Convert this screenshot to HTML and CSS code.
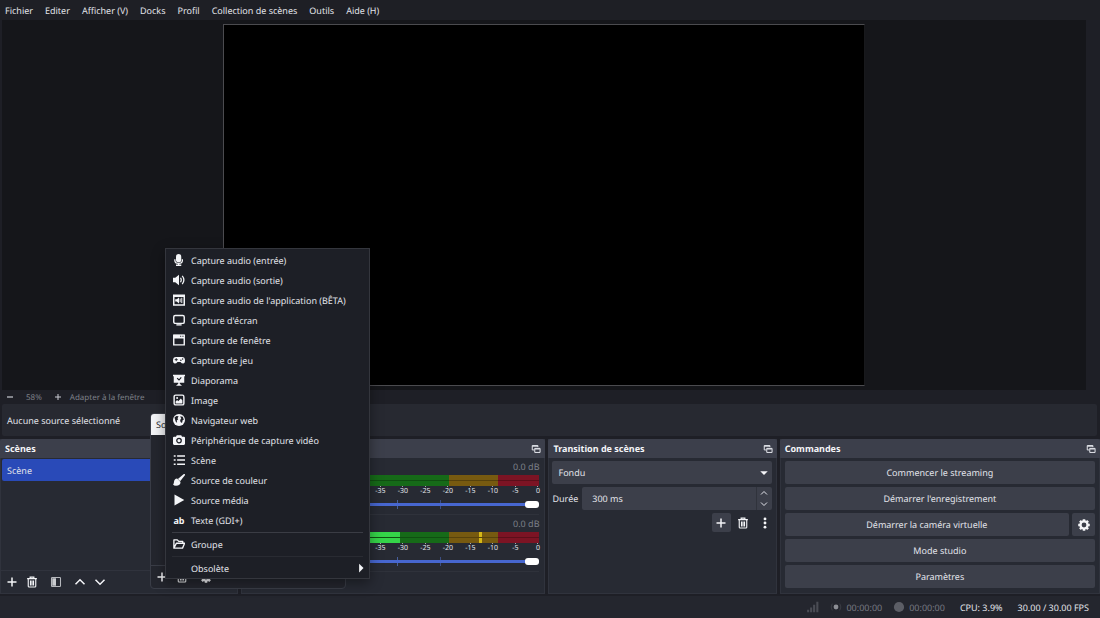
FILE: index.html
```html
<!DOCTYPE html>
<html lang="fr">
<head>
<meta charset="utf-8">
<title>Studio</title>
<link rel="stylesheet" href="styles.css">
</head>
<body>
<svg class="defs" aria-hidden="true">
  <symbol id="plus" viewBox="0 0 16 16"><path d="M8 2v12M2 8h12" fill="none" stroke="currentColor" stroke-width="2"/></symbol>
  <symbol id="minus" viewBox="0 0 16 16"><path d="M2 8h12" fill="none" stroke="currentColor" stroke-width="2.4"/></symbol>
  <symbol id="trash" viewBox="0 0 16 16"><path d="M1.500 3.500h13M5.500 3V1.500h5V3M3 4v9.500q0 1.200 1.200 1.200h7.600q1.200 0 1.200-1.200V4M6 6v6.500M8 6v6.500M10 6v6.500" fill="none" stroke="currentColor" stroke-width="1.500"/></symbol>
  <symbol id="filter" viewBox="0 0 16 16"><rect x="2" y="2" width="12" height="12" rx="1" fill="none" stroke="currentColor" stroke-width="1.400" opacity=".7"/><path d="M3 3h5v10H3z" fill="currentColor" opacity=".8"/></symbol>
  <symbol id="up" viewBox="0 0 16 16"><path d="M2 11l6-6 6 6" fill="none" stroke="currentColor" stroke-width="2"/></symbol>
  <symbol id="down" viewBox="0 0 16 16"><path d="M2 5l6 6 6-6" fill="none" stroke="currentColor" stroke-width="2"/></symbol>
  <symbol id="dots" viewBox="0 0 16 16"><g fill="currentColor"><circle cx="8" cy="2.500" r="1.900"/><circle cx="8" cy="8" r="1.900"/><circle cx="8" cy="13.500" r="1.900"/></g></symbol>
  <symbol id="popout" viewBox="0 0 16 16"><path d="M11 5V2.500H2v7h3M2 3.500h9M6 7h8.500v6.500H6zM6 8h8" fill="none" stroke="currentColor" stroke-width="1.600"/></symbol>
  <symbol id="gear" viewBox="0 0 16 16"><circle cx="8" cy="8" r="4.700" fill="none" stroke="currentColor" stroke-width="3"/><g stroke="currentColor" stroke-width="3.400"><path d="M8 .3v3M8 12.700v3M.3 8h3M12.700 8h3M2.600 2.600l2 2M11.400 11.400l2 2M13.400 2.600l-2 2M4.600 11.400l-2 2"/></g></symbol>
  <symbol id="mic" viewBox="0 0 16 16"><rect x="4" y="0" width="7" height="11" rx="3.500" fill="currentColor"/><path d="M2.500 7v1.500q0 3.900 5 3.900t5-3.900V7M7.500 12v3M4 15h7" fill="none" stroke="currentColor" stroke-width="1.700"/></symbol>
  <symbol id="speaker" viewBox="0 0 16 16"><path d="M0 5h3l5-4v14l-5-4H0z" fill="currentColor"/><path d="M10 5q2 3 0 6M12.300 2.500q4.400 5.500 0 11" fill="none" stroke="currentColor" stroke-width="1.700"/></symbol>
  <symbol id="appaudio" viewBox="0 0 16 16"><path d="M1 1.500h14v13H1zM1 3h14" fill="none" stroke="currentColor" stroke-width="2"/><path d="M3 7h2l3-2.500v8L5 10H3z" fill="currentColor"/><path d="M9.500 6v5M11.700 5v7" fill="none" stroke="currentColor" stroke-width="1.300"/></symbol>
  <symbol id="screen" viewBox="0 0 16 16"><rect x="1" y="2" width="14" height="10.500" rx="2" fill="none" stroke="currentColor" stroke-width="1.900"/><path d="M4.500 14.500h7" stroke="currentColor" stroke-width="1.800"/></symbol>
  <symbol id="window" viewBox="0 0 16 16"><path d="M1 1.500h14v13H1z" fill="none" stroke="currentColor" stroke-width="1.900"/><path d="M1 1h14v5H1z" fill="currentColor"/><path d="M9.500 3h1.500M12.500 3H14" stroke="#1d1f26" stroke-width="1.500"/></symbol>
  <symbol id="game" viewBox="0 0 16 16"><path d="M4 4Q0 4 0 8.500 0 12.500 2.500 12.500 4.500 12.500 6 10.500h4q1.500 2 3.500 2 2.500 0 2.500-4Q16 4 12 4z" fill="currentColor"/><path d="M4.300 5.500v4M2.300 7.500h4" stroke="#1d1f26" stroke-width="1.200"/><circle cx="10.500" cy="8.200" r="1" fill="#1d1f26"/><circle cx="12.800" cy="6.500" r="1" fill="#1d1f26"/></symbol>
  <symbol id="slides" viewBox="0 0 16 16"><path d="M0 1h16v2h-1v8.500H1V3H0zM7 11h2v2l3 2.500H4L7 13z" fill="currentColor"/><path d="M5.500 5.500L8 8l3-3.500" fill="none" stroke="#1d1f26" stroke-width="1.500"/></symbol>
  <symbol id="image" viewBox="0 0 16 16"><rect x="1.500" y="1.500" width="13" height="13" rx="2" fill="none" stroke="currentColor" stroke-width="1.900"/><path d="M3.500 12.500V10l2-2 1.500 1.500L10.500 6l2 2.500v4z" fill="currentColor"/><circle cx="5.500" cy="5.300" r="1.300" fill="currentColor"/></symbol>
  <symbol id="globe" viewBox="0 0 16 16"><circle cx="8" cy="8" r="8" fill="currentColor"/><path d="M2 4.500L4.500 2.500 7.500 3 6 5.500 7 7 5 8.500 5.500 12 3.500 10zM9.500 3l3.500.5 1.500 4-1.500.5-1 4-2-1.500L9.500 8 11 6z" fill="#1d1f26"/></symbol>
  <symbol id="camera" viewBox="0 0 16 16"><path d="M5 1.500h6l1 2h2.500Q16 3.500 16 5v8q0 1.500-1.500 1.500h-13Q0 14.500 0 13V5q0-1.500 1.500-1.500H4z" fill="currentColor"/><circle cx="8" cy="8.700" r="3" fill="none" stroke="#1d1f26" stroke-width="1.700"/></symbol>
  <symbol id="list" viewBox="0 0 16 16"><path d="M1 2.500h2.500M1 8h2.500M1 13.500h2.500M5.500 2.500H16M5.500 8H16M5.500 13.500H16" stroke="currentColor" stroke-width="2"/></symbol>
  <symbol id="brush" viewBox="0 0 16 16"><path d="M15.800.2q.6.800-.2 1.800L9.500 9.500l-3-3L14 .4q1-.8 1.800-.2z" fill="currentColor"/><path d="M5.500 6l4.500 4.500q0 5-6 5Q1 15.500 0 13.500q1.300-.5 1.300-3Q1.700 6.500 5.500 6z" fill="currentColor"/></symbol>
  <symbol id="play" viewBox="0 0 16 16"><path d="M2 .8L15 8 2 15.200z" fill="currentColor"/></symbol>
  <symbol id="folder" viewBox="0 0 16 16"><path d="M1.200 13.500V2.500h4.500l2 2H13V7M1.200 13.500L4.500 7h11l-2.800 6.500z" fill="none" stroke="currentColor" stroke-width="1.800" stroke-linejoin="round"/></symbol>
  <symbol id="right" viewBox="0 0 16 16"><path d="M5 1l7 7-7 7z" fill="currentColor"/></symbol>
  <symbol id="caret" viewBox="0 0 16 16"><path d="M2 5h12l-6 6z" fill="currentColor"/></symbol>
  <symbol id="signal" viewBox="0 0 16 16"><path d="M1.500 11.500V15M5.500 8.500V15M9.500 5V15M13.800 1V15" stroke="currentColor" stroke-width="2.800"/></symbol>
  <symbol id="live" viewBox="0 0 16 16"><circle cx="8" cy="8" r="3.200" fill="currentColor"/><path d="M13 3.500q3 4.500 0 9M3 3.500q-3 4.500 0 9" fill="none" stroke="currentColor" stroke-width="1.200" opacity=".25"/></symbol>
  <symbol id="disc" viewBox="0 0 16 16"><circle cx="8" cy="8" r="6.800" fill="currentColor"/></symbol>
</svg>

<div class="app">
  <nav class="menubar">
    <button>Fichier</button><button>Editer</button><button>Afficher (V)</button><button>Docks</button><button>Profil</button><button>Collection de scènes</button><button>Outils</button><button>Aide (H)</button>
  </nav>

  <main class="preview"><div class="canvas"></div></main>

  <div class="zoombar">
    <button aria-label="Réduire"><svg class="icon-xs"><use href="#minus"/></svg></button>
    <span>58%</span>
    <button aria-label="Agrandir"><svg class="icon-xs"><use href="#plus"/></svg></button>
    <button class="fit">Adapter à la fenêtre</button>
  </div>

  <div class="context">Aucune source sélectionné</div>

  <div class="docks">
    <section class="dock">
      <header class="dock-title"><h2>Scènes</h2></header>
      <ul class="scene-list"><li><button class="scene">Scène</button></li></ul>
      <div class="toolbar">
        <button aria-label="Ajouter une scène"><svg class="icon"><use href="#plus"/></svg></button>
        <button aria-label="Supprimer la scène"><svg class="icon"><use href="#trash"/></svg></button>
        <button class="spaced" aria-label="Filtres"><svg class="icon"><use href="#filter"/></svg></button>
        <button class="spaced" aria-label="Monter"><svg class="icon"><use href="#up"/></svg></button>
        <button aria-label="Descendre"><svg class="icon"><use href="#down"/></svg></button>
      </div>
    </section>

    <section class="dock">
      <header class="dock-title"><h2></h2><button aria-label="Détacher"><svg class="icon-sm"><use href="#popout"/></svg></button></header>
      <div class="mixer">
        <div class="channel">
          <output class="db">0.0 dB</output>
          <div class="meter"><i></i><i></i></div>
          <div class="scale"><span>-60</span><span>-55</span><span>-50</span><span>-45</span><span>-40</span><span>-35</span><span>-30</span><span>-25</span><span>-20</span><span>-15</span><span>-10</span><span>-5</span><span>0</span></div>
          <input type="range" class="volume" min="0" max="100" value="100" aria-label="Volume, première piste">
        </div>
        <div class="channel">
          <output class="db">0.0 dB</output>
          <div class="meter active"><i></i><i></i></div>
          <div class="scale"><span>-60</span><span>-55</span><span>-50</span><span>-45</span><span>-40</span><span>-35</span><span>-30</span><span>-25</span><span>-20</span><span>-15</span><span>-10</span><span>-5</span><span>0</span></div>
          <input type="range" class="volume" min="0" max="100" value="100" aria-label="Volume, deuxième piste">
        </div>
      </div>
    </section>

    <section class="dock">
      <header class="dock-title"><h2>Transition de scènes</h2><button aria-label="Détacher"><svg class="icon-sm"><use href="#popout"/></svg></button></header>
      <div class="transition">
        <div class="select-wrap">
          <select aria-label="Transition"><option>Fondu</option></select>
          <svg class="icon-sm"><use href="#caret"/></svg>
        </div>
        <div class="duration">
          <label for="duration">Durée</label>
          <div class="spin">
            <input id="duration" type="text" value="300 ms">
            <div class="steps">
              <button aria-label="Augmenter"><svg class="icon-xs"><use href="#up"/></svg></button>
              <button aria-label="Diminuer"><svg class="icon-xs"><use href="#down"/></svg></button>
            </div>
          </div>
        </div>
        <div class="actions">
          <button class="filled" aria-label="Ajouter"><svg class="icon"><use href="#plus"/></svg></button>
          <button aria-label="Supprimer"><svg class="icon"><use href="#trash"/></svg></button>
          <button aria-label="Propriétés"><svg class="icon"><use href="#dots"/></svg></button>
        </div>
      </div>
    </section>

    <section class="dock">
      <header class="dock-title"><h2>Commandes</h2><button aria-label="Détacher"><svg class="icon-sm"><use href="#popout"/></svg></button></header>
      <div class="controls">
        <button>Commencer le streaming</button>
        <button>Démarrer l'enregistrement</button>
        <div class="pair"><button>Démarrer la caméra virtuelle</button><button aria-label="Configurer la caméra virtuelle"><svg class="icon"><use href="#gear"/></svg></button></div>
        <button>Mode studio</button>
        <button>Paramètres</button>
      </div>
    </section>
  </div>

  <footer class="status">
    <svg class="icon dim"><use href="#signal"/></svg>
    <span class="timer"><svg class="icon"><use href="#live"/></svg>00:00:00</span>
    <span class="timer rec"><svg class="icon"><use href="#disc"/></svg>00:00:00</span>
    <span>CPU: 3.9%</span>
    <span>30.00 / 30.00 FPS</span>
  </footer>

  <section class="sources">
    <h2>Sources</h2>
    <div class="sources-list"></div>
    <div class="toolbar">
      <button aria-label="Ajouter une source"><svg class="icon"><use href="#plus"/></svg></button>
      <button aria-label="Supprimer la source"><svg class="icon"><use href="#trash"/></svg></button>
      <button class="spaced" aria-label="Propriétés de la source"><svg class="icon"><use href="#gear"/></svg></button>
    </div>
  </section>

  <div class="menu" role="menu">
    <button role="menuitem"><svg class="icon"><use href="#mic"/></svg>Capture audio (entrée)</button>
    <button role="menuitem"><svg class="icon"><use href="#speaker"/></svg>Capture audio (sortie)</button>
    <button role="menuitem"><svg class="icon"><use href="#appaudio"/></svg>Capture audio de l'application (BÊTA)</button>
    <button role="menuitem"><svg class="icon"><use href="#screen"/></svg>Capture d'écran</button>
    <button role="menuitem"><svg class="icon"><use href="#window"/></svg>Capture de fenêtre</button>
    <button role="menuitem"><svg class="icon"><use href="#game"/></svg>Capture de jeu</button>
    <button role="menuitem"><svg class="icon"><use href="#slides"/></svg>Diaporama</button>
    <button role="menuitem"><svg class="icon"><use href="#image"/></svg>Image</button>
    <button role="menuitem"><svg class="icon"><use href="#globe"/></svg>Navigateur web</button>
    <button role="menuitem"><svg class="icon"><use href="#camera"/></svg>Périphérique de capture vidéo</button>
    <button role="menuitem"><svg class="icon"><use href="#list"/></svg>Scène</button>
    <button role="menuitem"><svg class="icon"><use href="#brush"/></svg>Source de couleur</button>
    <button role="menuitem"><svg class="icon"><use href="#play"/></svg>Source média</button>
    <button role="menuitem"><b class="ab" aria-hidden="true">ab</b>Texte (GDI+)</button>
    <hr>
    <button role="menuitem"><svg class="icon"><use href="#folder"/></svg>Groupe</button>
    <hr class="faint">
    <button role="menuitem"><span class="icon"></span>Obsolète<svg class="icon-sm arrow"><use href="#right"/></svg></button>
  </div>
</div>
</body>
</html>
```
FILE: styles.css
```css
* { box-sizing: border-box; }

body {
  margin: 0;
  background: #1e1f26;
  color: #e2e4ea;
  font: 9px/15px "Noto Sans", "Open Sans", sans-serif;
  text-rendering: geometricPrecision;
}

button, input, select {
  font: inherit;
  color: inherit;
  text-rendering: inherit;
  background: none;
  border: 0;
  padding: 0;
  margin: 0;
}

button { display: inline-flex; align-items: center; white-space: nowrap; }
h2, ul { margin: 0; padding: 0; list-style: none; }
h2 { font-size: 9px; font-weight: 700; color: #f4f5f8; }

.defs { position: absolute; width: 0; height: 0; }
.icon { width: 12px; height: 12px; flex: none; color: #f4f5f8; }
.icon-sm { width: 10px; height: 10px; flex: none; }
.icon-xs { width: 8px; height: 8px; flex: none; }

.app {
  position: relative;
  display: flex;
  flex-direction: column;
  min-height: 100vh;
}

.menubar {
  display: flex;
  gap: 12px;
  height: 20px;
  padding: 0 5px;
  background: #1e1f25;
}

.preview {
  flex: 1;
  display: flex;
  justify-content: center;
  align-items: flex-start;
  margin: 0 14px 0 2px;
  padding: 4px 0;
  background: #15161a;
}

.canvas {
  width: 59.3%;
  aspect-ratio: 16 / 9;
  background: #000;
  border: 1px solid #4b4b4f;
  border-right-color: #18191c;
}

.zoombar {
  display: flex;
  align-items: center;
  gap: 12px;
  height: 14px;
  padding: 0 6px;
  font-size: 8px;
  color: #7d7f88;
}
.zoombar .icon-xs { color: #c9cbd2; }
.zoombar .fit { margin-left: -4px; }

.context {
  display: flex;
  align-items: center;
  height: 32px;
  margin: 0 3px 3px 2px;
  padding: 0 5px;
  background: #272931;
  border-radius: 2px;
}

.docks {
  display: grid;
  grid-template-columns: 238fr 304fr 228fr 320fr;
  gap: 3px;
  height: 155px;
}

.dock {
  display: flex;
  flex-direction: column;
  min-width: 0;
  background: #272a33;
  border: 1px solid #30333d;
  border-top: 0;
}

.dock-title {
  display: flex;
  align-items: center;
  justify-content: space-between;
  height: 19px;
  margin: 0 -1px;
  padding: 0 4px 0 5px;
  background: #3c3f4b;
  border-radius: 2px 2px 0 0;
}

.scene-list { flex: 1; padding: 1px; border-bottom: 1px solid #30333d; }
.scene {
  width: 100%;
  height: 22px;
  padding: 0 5px;
  background: #294ab8;
  border-radius: 2px;
}

.toolbar {
  display: flex;
  align-items: center;
  gap: 8px;
  height: 22px;
  padding: 0 5px;
}
.toolbar .spaced { margin-left: 4px; }

.mixer { padding: 0 5px 0 24px; }
.channel {
  display: flex;
  flex-direction: column;
  height: 57px;
  border-bottom: 1px solid #2f323b;
}
.db {
  align-self: flex-end;
  height: 17px;
  line-height: 17px;
  color: #7d8089;
}
.meter {
  display: grid;
  gap: 1px;
  height: 11px;
  background:
    linear-gradient(#0004, #0004),
    linear-gradient(90deg, #166a18 67%, #775a10 67% 85%, #7c1424 85%);
}
.meter i { background: linear-gradient(90deg, #166a18 67%, #775a10 67% 85%, #7c1424 85%); }
.meter.active i {
  background: linear-gradient(90deg, #35d549 49%, #166a18 49% 67%, #775a10 67% 78%, #d5b817 78% 79%, #775a10 79% 85%, #7c1424 85%);
}
.scale {
  display: flex;
  justify-content: space-between;
  height: 12px;
  font-size: 7px;
  line-height: 8px;
}
.scale span {
  display: flex;
  justify-content: center;
  width: 3px;
  padding-top: 2px;
  white-space: nowrap;
  background: linear-gradient(#a5a7ae, #a5a7ae) 50% 0 / 1px 1px no-repeat;
}
.volume {
  -webkit-appearance: none;
  appearance: none;
  width: 100%;
  height: 9px;
  margin-top: 2px;
  background:
    linear-gradient(#485f9c, #485f9c) 48% 0 / 1px 100% no-repeat,
    linear-gradient(#3c4e83, #3c4e83) 64% 0 / 1px 100% no-repeat;
}
.volume::-webkit-slider-runnable-track {
  height: 3px;
  background: #4767d0;
  border-radius: 2px;
}
.volume::-webkit-slider-thumb {
  -webkit-appearance: none;
  width: 14px;
  height: 7px;
  margin-top: -2px;
  background: #fff;
  border-radius: 3px;
}

.transition {
  display: flex;
  flex-direction: column;
  gap: 3px;
  padding: 3px 4px 4px 3px;
}
.select-wrap { display: grid; align-items: center; }
.select-wrap > * { grid-area: 1 / 1; }
.select-wrap select {
  -webkit-appearance: none;
  appearance: none;
  height: 23px;
  padding: 0 6px;
  background: #3c3f4a;
  border-radius: 2px;
}
.select-wrap svg { justify-self: end; margin-right: 3px; color: #f4f5f8; pointer-events: none; }
.duration { display: flex; align-items: center; gap: 4px; }
.spin {
  flex: 1;
  display: flex;
  height: 23px;
  background: #3c3f4a;
  border-radius: 2px;
}
.spin input { flex: 1; min-width: 0; padding: 0 10px; }
.steps {
  display: flex;
  flex-direction: column;
  width: 16px;
  border-left: 1px solid #30333c;
}
.steps button { flex: 1; justify-content: center; }
.actions { display: flex; justify-content: flex-end; gap: 3px; margin-right: -3px; }
.actions button { width: 19px; height: 19px; justify-content: center; }
.actions .filled { background: #3c3f4a; border-radius: 2px; }

.controls {
  display: flex;
  flex-direction: column;
  gap: 3px;
  padding: 3px 4px;
}
.controls button {
  flex: 1;
  justify-content: center;
  min-height: 23px;
  background: #3c3f4a;
  border-radius: 2px;
}
.pair { display: flex; gap: 3px; }
.pair button:last-child { flex: 0 0 23px; }

.status {
  display: flex;
  align-items: center;
  justify-content: flex-end;
  gap: 15px;
  height: 22px;
  margin-top: 2px;
  padding: 0 11px;
  background: #24262e;
}
.status .dim { color: #4a4c54; }
.timer { display: flex; align-items: center; gap: 4px; margin-left: -4px; color: #777982; }
.timer .icon { color: #8c8e95; }
.timer.rec .icon { color: #5c5e66; }

.sources {
  position: absolute;
  left: 150px;
  top: 413px;
  display: flex;
  flex-direction: column;
  width: 196px;
  height: 176px;
  background: #24262e;
  border: 1px solid #3a3d47;
  border-radius: 4px;
  overflow: hidden;
}
.sources h2 {
  height: 21px;
  padding: 0 5px;
  line-height: 21px;
  font-weight: 400;
  background: #f4f5f8;
  color: #24262e;
}
.sources-list { flex: 1; border-bottom: 1px solid #3a3d47; }

.menu {
  position: absolute;
  left: 165px;
  top: 248px;
  display: flex;
  flex-direction: column;
  width: 205px;
  padding-top: 1px;
  background: #1d1f26;
  border: 1px solid #34363d;
  box-shadow: 0 4px 12px #0006;
}
.menu button { gap: 6px; height: 20px; padding: 0 7px; }
.menu hr {
  width: 191px;
  height: 1px;
  margin: 2px 6px 1px;
  border: 0;
  background: #3a3c44;
}
.menu .faint { background: #292b32; }
.menu .arrow { margin: 0 -4px 0 auto; color: #f4f5f8; }
.ab { width: 12px; color: #f4f5f8; }
```
